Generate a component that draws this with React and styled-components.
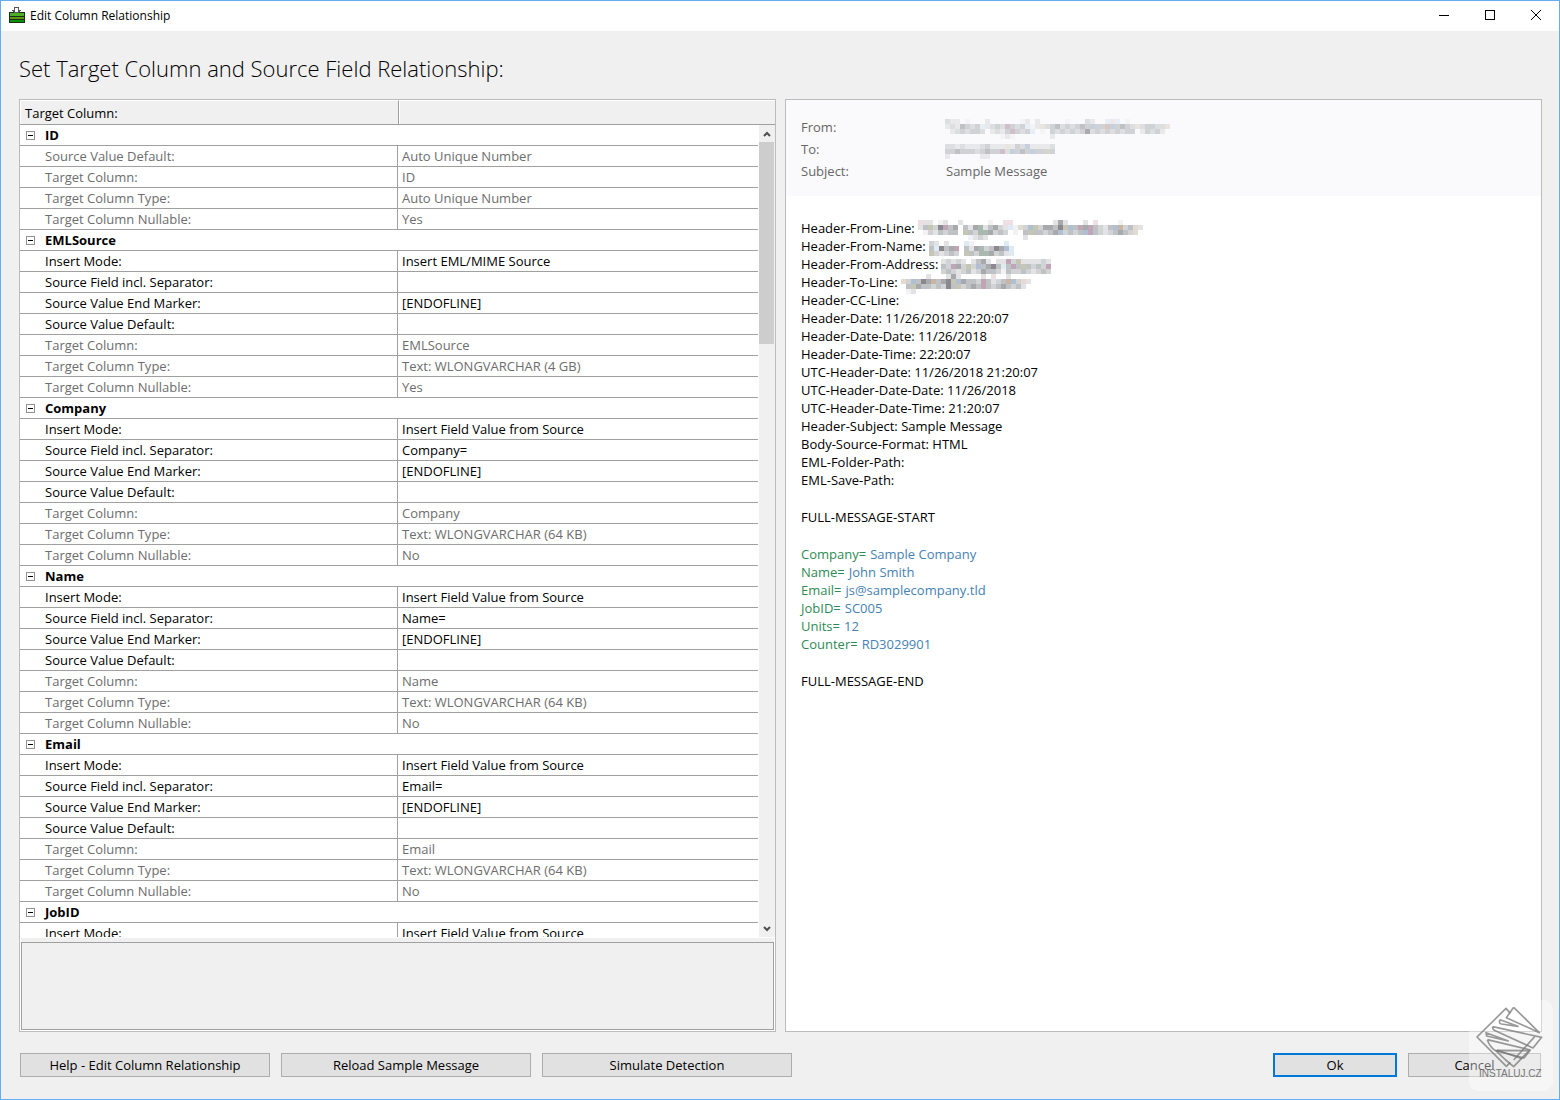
import { Fragment, useState } from "react";
import styled, { createGlobalStyle } from "styled-components";

const GlobalStyle = createGlobalStyle`
  * {
    box-sizing: border-box;
  }
  body {
    margin: 0;
    background: #f0f0f0;
    color: #000;
    font-family: "Open Sans", "Noto Sans", sans-serif;
    font-size: 13px;
  }
  button {
    font: inherit;
    color: inherit;
    padding: 0;
    border: 0;
    background: none;
  }
`;

const Window = styled.div`
  position: relative;
  display: flex;
  flex-direction: column;
  height: 100vh;
  border: 1px solid #63adf2;
  background: #f0f0f0;
`;

const TitleBar = styled.header`
  display: flex;
  align-items: center;
  height: 30px;
  padding: 0 0 2px 8px;
  background: #fff;
  font-size: 12px;
`;
const TitleText = styled.span`
  flex: 1;
  padding-left: 5px;
`;
const CaptionButton = styled.button`
  display: flex;
  align-items: center;
  justify-content: center;
  width: 46px;
  height: 28px;
`;

const Heading = styled.h1`
  margin: 0;
  padding: 21px 18px 15px;
  font-size: 22px;
  font-weight: 300;
  line-height: 32px;
`;

const Panels = styled.main`
  display: grid;
  grid-template-columns: 1fr 1fr;
  gap: 9px;
  flex: 1;
  min-height: 0;
  padding: 0 17px 0 18px;
`;
const Panel = styled.section`
  display: flex;
  flex-direction: column;
  min-width: 0;
  min-height: 0;
  border: 1px solid #bcbcbc;
  background: #fff;
`;

const GridHeader = styled.div`
  display: flex;
  height: 25px;
  border-bottom: 1px solid #a0a0a0;
`;
const GridHeaderCell = styled.div`
  width: ${(props) => (props.$last ? "auto" : "379px")};
  flex: ${(props) => (props.$last ? 1 : "none")};
  padding: 0 4px;
  border-top: 1px solid #fff;
  border-left: 1px solid #fff;
  border-right: ${(props) => (props.$last ? "0" : "1px solid #a0a0a0")};
  background: #f0f0f0;
  line-height: 24px;
`;

const GridBody = styled.div`
  display: flex;
  flex: 1;
  min-height: 0;
`;
const GridScroll = styled.div`
  flex: 1;
  min-width: 0;
  margin-right: 1px;
  overflow: hidden;
`;
const PropertyTable = styled.table`
  width: 100%;
  table-layout: fixed;
  border-collapse: separate;
  border-spacing: 0;
`;
const LabelCol = styled.col`
  width: 377px;
`;
const GroupCell = styled.th`
  height: 21px;
  padding: 0 0 0 6px;
  border-bottom: 1px solid #a0a0a0;
  font-weight: 700;
  line-height: 20px;
  text-align: left;
`;
const GroupTitle = styled.div`
  display: flex;
  align-items: center;
  gap: 10px;
`;
const Expander = styled.button`
  display: flex;
  align-items: center;
  width: 9px;
  height: 20px;
`;
const NameCell = styled.th`
  height: 21px;
  padding: 0 0 0 25px;
  border-bottom: 1px solid #a0a0a0;
  color: ${(props) => (props.$dim ? "#6d6d6d" : "#000")};
  font-weight: 400;
  line-height: 20px;
  text-align: left;
`;
const ValueCell = styled.td`
  height: 21px;
  padding: 0 0 0 4px;
  border-bottom: 1px solid #a0a0a0;
  border-left: 1px solid #a0a0a0;
  color: ${(props) => (props.$dim ? "#6d6d6d" : "#000")};
  line-height: 20px;
`;

const ScrollBar = styled.div`
  display: flex;
  flex-direction: column;
  width: 16px;
  background: #f0f0f0;
`;
const ScrollButton = styled.button`
  display: flex;
  align-items: center;
  justify-content: center;
  height: 17px;
`;
const ScrollTrack = styled.div`
  flex: 1;
`;
const ScrollThumb = styled.div`
  height: 26%;
  margin-right: 1px;
  background: #cdcdcd;
`;
const Splitter = styled.div`
  height: 4px;
  margin: 1px 1px 0;
  background: #f0f0f0;
`;
const Description = styled.div`
  height: 88px;
  margin: 0 1px 1px;
  border: 1px solid #a0a0a0;
  background: #f0f0f0;
`;

const MessageHeader = styled.dl`
  display: grid;
  grid-template-columns: 145px 1fr;
  grid-auto-rows: 22px;
  margin: 0;
  padding: 16px 15px 14px;
  background: #fafafc;
  color: #666;
  line-height: 22px;
`;
const Term = styled.dt`
  margin: 0;
`;
const Detail = styled.dd`
  display: flex;
  align-items: center;
  margin: 0;
`;
const MessageBody = styled.div`
  padding: 23px 15px;
  line-height: 18px;
`;
const Paragraph = styled.div`
  margin-bottom: 19px;
`;
const Line = styled.div`
  display: flex;
  align-items: center;
  gap: 4px;
  height: 18px;
  white-space: pre;
`;
const FieldKey = styled.span`
  color: #2e8b57;
`;
const FieldValue = styled.span`
  color: #4682b4;
`;
const Mosaic = styled.svg`
  flex: none;
  margin-top: 4px;
  margin-left: -1px;
  opacity: ${(props) => (props.$faint ? 0.7 : 1)};
`;

const Footer = styled.footer`
  display: flex;
  gap: 11px;
  padding: 21px 18px 22px 19px;
`;
const PushButton = styled.button`
  width: ${(props) => props.$width}px;
  height: 24px;
  margin-left: ${(props) => (props.$push ? "auto" : "0")};
  border: ${(props) => (props.$primary ? "2px solid #0078d7" : "1px solid #adadad")};
  background: #e1e1e1;
  line-height: 20px;
`;

const Watermark = styled.div`
  position: absolute;
  right: 6px;
  bottom: 8px;
  width: 84px;
  height: 91px;
  border-radius: 9px;
  background: rgba(255, 255, 255, 0.38);
  pointer-events: none;
`;

const editable = (field, column, mode = "Insert Field Value from Source") => [
  ["Insert Mode:", mode],
  ["Source Field incl. Separator:", field],
  ["Source Value End Marker:", "[ENDOFLINE]"],
  ["Source Value Default:", ""],
  ["Target Column:", column, true],
];

const groups = [
  {
    name: "ID",
    rows: [
      ["Source Value Default:", "Auto Unique Number", true],
      ["Target Column:", "ID", true],
      ["Target Column Type:", "Auto Unique Number", true],
      ["Target Column Nullable:", "Yes", true],
    ],
  },
  {
    name: "EMLSource",
    rows: [
      ...editable("", "EMLSource", "Insert EML/MIME Source"),
      ["Target Column Type:", "Text: WLONGVARCHAR (4 GB)", true],
      ["Target Column Nullable:", "Yes", true],
    ],
  },
  ...["Company", "Name", "Email"].map((name) => ({
    name,
    rows: [
      ...editable(`${name}=`, name),
      ["Target Column Type:", "Text: WLONGVARCHAR (64 KB)", true],
      ["Target Column Nullable:", "No", true],
    ],
  })),
  {
    name: "JobID",
    rows: [["Insert Mode:", "Insert Field Value from Source"]],
  },
];

// one letter per 5px block
const tones = {
  a: "#f2f2f4",
  b: "#e3e3e5",
  c: "#d2d3d5",
  d: "#bfc2c5",
  e: "#a7a9ad",
  f: "#8c8890",
  p: "#eedfe4",
  r: "#bfa5b6",
  g: "#a9b9b0",
  o: "#c6c6b4",
  n: "#b0bfd2",
  s: "#deebf3",
  w: "#e3dbd2",
  h: "#c9b5a4",
};

const masks = {
  fullName: [
    "pbb.ab..b.....a..pp........beb...b.p....a....",
    "bdocfrde.dbegbdecbsawcnoceedfondrerdcbdnhcdwb",
    ".acbdcdd.odcggecdc.a.doddcdencdcdnrdcbcdedcw.",
    "..........abcb.......b.......................",
  ],
  name: [
    "cb.b...sa......s.",
    "dsfder.dbegcdfens",
    "ocbcdc.odcggecdbs",
  ],
  address: [
    "bcbcb.bdeb.bbrcobbbbcb",
    "dcrecocndefdsdrdodcdcr",
    "cdcbcdbceddcadccdcbcdc",
  ],
  toLine: [
    ".....b...beb....b.p..b....",
    "wcndfehdefoneddcrdbcdhncwb",
    ".doeddcdcfdocdedrdcdedcdb.",
    ".ab.......................",
  ],
  headFrom: [
    "cbb.a...b......ab.b.....a...cb..sps.a........",
    "bcbedcdsbcdcrdcdsabwcdecdcdednddhndedcwcddccw",
    ".bcdcddc.bcbdrdcds.a.dcdcdcdfcdcdcdcdd.bdcdb.",
    "...........aba.......b.......................",
  ],
  headTo: [
    "ccbcbbbcdbbbwbdcnbbbbc",
    "ddedddcdeddrcndednddod",
    "b......bb.............",
  ],
};

const Redacted = ({ rows, faint }) => (
  <Mosaic
    $faint={faint}
    width={rows[0].length * 5}
    height={rows.length * 5}
    shapeRendering="crispEdges"
    aria-hidden="true"
  >
    {rows.map((row, y) =>
      [...row].map((tone, x) =>
        tones[tone] ? (
          <rect
            key={`${x}-${y}`}
            x={x * 5}
            y={y * 5}
            width="5"
            height="5"
            fill={tones[tone]}
          />
        ) : null
      )
    )}
  </Mosaic>
);

const headerLines = [
  ["Header-From-Line:", masks.fullName],
  ["Header-From-Name:", masks.name],
  ["Header-From-Address:", masks.address],
  ["Header-To-Line:", masks.toLine],
  ["Header-CC-Line:"],
  ["Header-Date: 11/26/2018 22:20:07"],
  ["Header-Date-Date: 11/26/2018"],
  ["Header-Date-Time: 22:20:07"],
  ["UTC-Header-Date: 11/26/2018 21:20:07"],
  ["UTC-Header-Date-Date: 11/26/2018"],
  ["UTC-Header-Date-Time: 21:20:07"],
  ["Header-Subject: Sample Message"],
  ["Body-Source-Format: HTML"],
  ["EML-Folder-Path:"],
  ["EML-Save-Path:"],
];

const fields = [
  ["Company=", "Sample Company"],
  ["Name=", "John Smith"],
  ["Email=", "js@samplecompany.tld"],
  ["JobID=", "SC005"],
  ["Units=", "12"],
  ["Counter=", "RD3029901"],
];

const AppIcon = () => (
  <svg width="16" height="16" viewBox="0 0 16 16" shapeRendering="crispEdges">
    <rect x="0" y="5" width="16" height="11" fill="#1d2b1a" />
    <rect x="1" y="6" width="14" height="3" fill="#4cae22" />
    <rect x="1" y="10" width="14" height="2" fill="#5c9a0c" />
    <rect x="1" y="13" width="14" height="2" fill="#079307" />
    <path d="M5 0h5v3h2v1l-3 2h-3l-3-2v-1h2z" fill="#555" />
    <path d="M6 1h3v3h1l-2 1h-1l-2-1h1z" fill="#fff" />
  </svg>
);

const Chevron = ({ down }) => (
  <svg width="8" height="6" viewBox="0 0 8 6">
    <path
      d={down ? "M1 1L4 4L7 1" : "M1 5L4 2L7 5"}
      fill="none"
      stroke="#505050"
      strokeWidth="2"
    />
  </svg>
);

const WatermarkLogo = () => (
  <svg width="84" height="91" viewBox="0 0 252 273">
    <g
      fill="none"
      stroke="#777"
      strokeOpacity="0.75"
      strokeWidth="5"
      strokeLinejoin="round"
    >
      <path d="M124 40L111 25L24 111L112 199L124 187" />
      <path d="M134 22L211 98L112 53L134 22" />
      <path d="M93 59L147 79L97 72Q88 70 93 59" />
      <path d="M71 80L218 112L192 144L79 92Q70 88 71 80" />
      <path d="M197 110L134 180" />
      <path d="M51 98L118 123L53 108Z" />
      <path d="M55 119L184 150L165 174L78 151Q62 140 55 119" />
      <path d="M80 151L110 180L134 200L180 152L84 151" />
      <path d="M84 151L160 176" />
    </g>
    <text
      x="30"
      y="230"
      fill="#777"
      fontFamily="'Liberation Sans', sans-serif"
      fontSize="30"
    >
      INSTALUJ.CZ
    </text>
  </svg>
);

function PropertyGroup({ group }) {
  const [open, setOpen] = useState(true);
  return (
    <Fragment>
      <tr>
        <GroupCell colSpan={2}>
          <GroupTitle>
            <Expander
              aria-label={`Toggle ${group.name}`}
              onClick={() => setOpen(!open)}
            >
              <svg width="9" height="9" viewBox="0 0 9 9">
                <rect x="0.5" y="0.5" width="8" height="8" fill="#fff" stroke="#919191" />
                <path d={open ? "M2 4.5h5" : "M2 4.5h5M4.5 2v5"} stroke="#000" />
              </svg>
            </Expander>
            {group.name}
          </GroupTitle>
        </GroupCell>
      </tr>
      {open &&
        group.rows.map(([name, value, dim]) => (
          <tr key={name}>
            <NameCell scope="row" $dim={dim}>
              {name}
            </NameCell>
            <ValueCell $dim={dim}>{value}</ValueCell>
          </tr>
        ))}
    </Fragment>
  );
}

export default function App() {
  return (
    <>
      <GlobalStyle />
      <Window>
        <TitleBar>
          <AppIcon />
          <TitleText>Edit Column Relationship</TitleText>
          <CaptionButton aria-label="Minimize">
            <svg width="10" height="10">
              <path d="M0 5.5h10" stroke="#000" />
            </svg>
          </CaptionButton>
          <CaptionButton aria-label="Maximize">
            <svg width="10" height="10">
              <rect x="0.5" y="0.5" width="9" height="9" fill="none" stroke="#000" />
            </svg>
          </CaptionButton>
          <CaptionButton aria-label="Close">
            <svg width="10" height="10">
              <path d="M0 0L10 10M10 0L0 10" stroke="#000" />
            </svg>
          </CaptionButton>
        </TitleBar>

        <Heading>Set Target Column and Source Field Relationship:</Heading>

        <Panels>
          <Panel>
            <GridHeader>
              <GridHeaderCell>Target Column:</GridHeaderCell>
              <GridHeaderCell $last />
            </GridHeader>
            <GridBody>
              <GridScroll>
                <PropertyTable>
                  <colgroup>
                    <LabelCol />
                    <col />
                  </colgroup>
                  <tbody>
                    {groups.map((group) => (
                      <PropertyGroup key={group.name} group={group} />
                    ))}
                  </tbody>
                </PropertyTable>
              </GridScroll>
              <ScrollBar>
                <ScrollButton aria-label="Scroll up">
                  <Chevron />
                </ScrollButton>
                <ScrollTrack>
                  <ScrollThumb />
                </ScrollTrack>
                <ScrollButton aria-label="Scroll down">
                  <Chevron down />
                </ScrollButton>
              </ScrollBar>
            </GridBody>
            <Splitter />
            <Description />
          </Panel>

          <Panel>
            <MessageHeader>
              <Term>From:</Term>
              <Detail>
                <Redacted rows={masks.headFrom} faint />
              </Detail>
              <Term>To:</Term>
              <Detail>
                <Redacted rows={masks.headTo} faint />
              </Detail>
              <Term>Subject:</Term>
              <Detail>Sample Message</Detail>
            </MessageHeader>
            <MessageBody>
              <Paragraph>
                {headerLines.map(([text, mask]) => (
                  <Line key={text}>
                    {text}
                    {mask && <Redacted rows={mask} />}
                  </Line>
                ))}
              </Paragraph>
              <Paragraph>
                <Line>FULL-MESSAGE-START</Line>
              </Paragraph>
              <Paragraph>
                {fields.map(([key, value]) => (
                  <Line key={key}>
                    <FieldKey>{key}</FieldKey>
                    <FieldValue>{value}</FieldValue>
                  </Line>
                ))}
              </Paragraph>
              <Paragraph>
                <Line>FULL-MESSAGE-END</Line>
              </Paragraph>
            </MessageBody>
          </Panel>
        </Panels>

        <Footer>
          <PushButton $width={250}>Help - Edit Column Relationship</PushButton>
          <PushButton $width={250}>Reload Sample Message</PushButton>
          <PushButton $width={250}>Simulate Detection</PushButton>
          <PushButton $width={124} $primary $push>
            Ok
          </PushButton>
          <PushButton $width={133}>Cancel</PushButton>
        </Footer>

        <Watermark>
          <WatermarkLogo />
        </Watermark>
      </Window>
    </>
  );
}
